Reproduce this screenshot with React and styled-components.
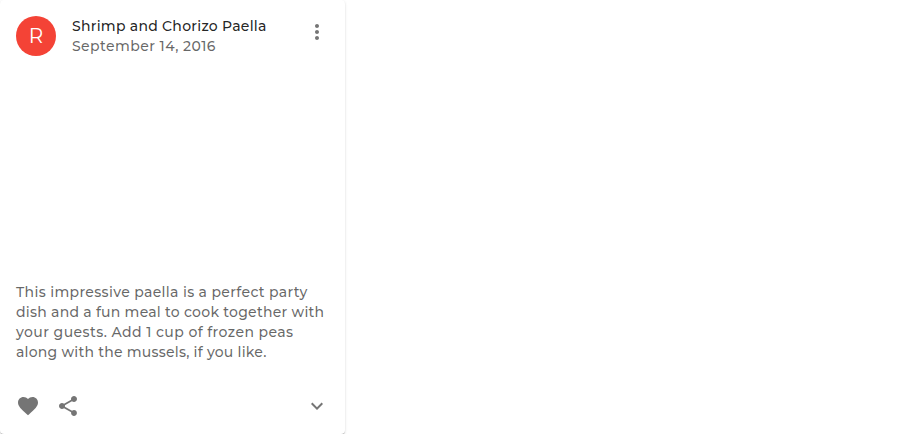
import React from 'react';
import styled, { createGlobalStyle, css } from 'styled-components';

const GlobalStyle = createGlobalStyle`
  *, *::before, *::after { box-sizing: border-box; }
  body { margin: 0; background: #fff; overflow: hidden; }
`;

const Card = styled.article`
  display: flex;
  flex-direction: column;
  width: 345px;
  height: 434px;
  border-radius: 4px;
  background: #fff;
  box-shadow: 0 2px 1px -1px rgba(0, 0, 0, 0.2), 0 1px 1px 0 rgba(0, 0, 0, 0.14),
    0 1px 3px 0 rgba(0, 0, 0, 0.12);
  font-family: Montserrat, Inter, 'Open Sans', sans-serif;
  color: rgba(0, 0, 0, 0.87);
`;

const CardHeader = styled.header`
  display: flex;
  align-items: center;
  height: 72px;
  padding: 16px;
`;

const Avatar = styled.div`
  display: flex;
  flex: none;
  align-items: center;
  justify-content: center;
  width: 40px;
  height: 40px;
  margin-right: 16px;
  border-radius: 50%;
  background: #f44336;
  color: #fff;
  font-size: 20px;
  font-weight: 400;
  line-height: 1;
`;

const Heading = styled.div`
  flex: 1;
`;

const Line = styled.span`
  display: block;
  width: max-content;
  font-size: 14px;
  font-weight: 500;
  line-height: 20px;
  white-space: nowrap;
  color: ${({ $muted }) => ($muted ? 'rgba(0, 0, 0, 0.6)' : 'rgba(0, 0, 0, 0.87)')};
  letter-spacing: ${({ $spacing }) => $spacing || '0'};
`;

const IconButton = styled.button`
  display: inline-flex;
  flex: none;
  padding: 8px;
  border: 0;
  border-radius: 50%;
  background: transparent;
  color: rgba(0, 0, 0, 0.54);
  cursor: pointer;
  ${({ $header }) => $header && css`
    align-self: flex-start;
    margin: -4px -8px -4px 0;
  `}
  ${({ $end }) => $end && css`
    margin-left: auto;
  `}
`;

const Icon = styled.svg`
  display: block;
  width: 24px;
  height: 24px;
  fill: currentColor;
`;

const Media = styled.div`
  flex: none;
  height: 194px;
`;

const CardContent = styled.div`
  padding: 16px;
`;

const CardActions = styled.footer`
  display: flex;
  align-items: center;
  padding: 8px;
`;

const icons = {
  more: 'M12 8c1.1 0 2-.9 2-2s-.9-2-2-2-2 .9-2 2 .9 2 2 2zm0 2c-1.1 0-2 .9-2 2s.9 2 2 2 2-.9 2-2-.9-2-2-2zm0 6c-1.1 0-2 .9-2 2s.9 2 2 2 2-.9 2-2-.9-2-2-2z',
  heart: 'M12 21.35l-1.45-1.32C5.4 15.36 2 12.28 2 8.5 2 5.42 4.42 3 7.5 3c1.74 0 3.41.81 4.5 2.09C13.09 3.81 14.76 3 16.5 3 19.58 3 22 5.42 22 8.5c0 3.78-3.4 6.86-8.55 11.54L12 21.35z',
  share: 'M18 16.08c-.76 0-1.44.3-1.96.77L8.91 12.7c.05-.23.09-.46.09-.7s-.04-.47-.09-.7l7.05-4.11c.54.5 1.25.81 2.04.81 1.66 0 3-1.34 3-3s-1.34-3-3-3-3 1.34-3 3c0 .24.04.47.09.7L8.04 9.81C7.5 9.31 6.79 9 6 9c-1.66 0-3 1.34-3 3s1.34 3 3 3c.79 0 1.5-.31 2.04-.81l7.12 4.16c-.05.21-.08.43-.08.65 0 1.61 1.31 2.92 2.92 2.92 1.61 0 2.92-1.31 2.92-2.92s-1.31-2.92-2.92-2.92z',
  expand: 'M16.59 8.59L12 13.17 7.41 8.59 6 10l6 6 6-6z',
};

function ActionButton({ icon, label, ...props }) {
  return (
    <IconButton type="button" aria-label={label} {...props}>
      <Icon viewBox="0 0 24 24" aria-hidden="true">
        <path d={icons[icon]} />
      </Icon>
    </IconButton>
  );
}

const description = [
  { text: 'This impressive paella is a perfect party', spacing: '0.34px' },
  { text: 'dish and a fun meal to cook together with', spacing: '0.25px' },
  { text: 'your guests. Add 1 cup of frozen peas', spacing: '0.42px' },
  { text: 'along with the mussels, if you like.', spacing: '0.23px' },
];

export default function App() {
  return (
    <>
      <GlobalStyle />
      <Card>
        <CardHeader>
          <Avatar>R</Avatar>
          <Heading>
            <Line $spacing="0.27px">Shrimp and Chorizo Paella</Line>
            <Line $muted $spacing="0.42px">September 14, 2016</Line>
          </Heading>
          <ActionButton icon="more" label="settings" $header />
        </CardHeader>
        <Media />
        <CardContent>
          {description.map(({ text, spacing }) => (
            <Line key={text} $muted $spacing={spacing}>{text}</Line>
          ))}
        </CardContent>
        <CardActions>
          <ActionButton icon="heart" label="add to favorites" />
          <ActionButton icon="share" label="share" />
          <ActionButton icon="expand" label="show more" $end />
        </CardActions>
      </Card>
    </>
  );
}
